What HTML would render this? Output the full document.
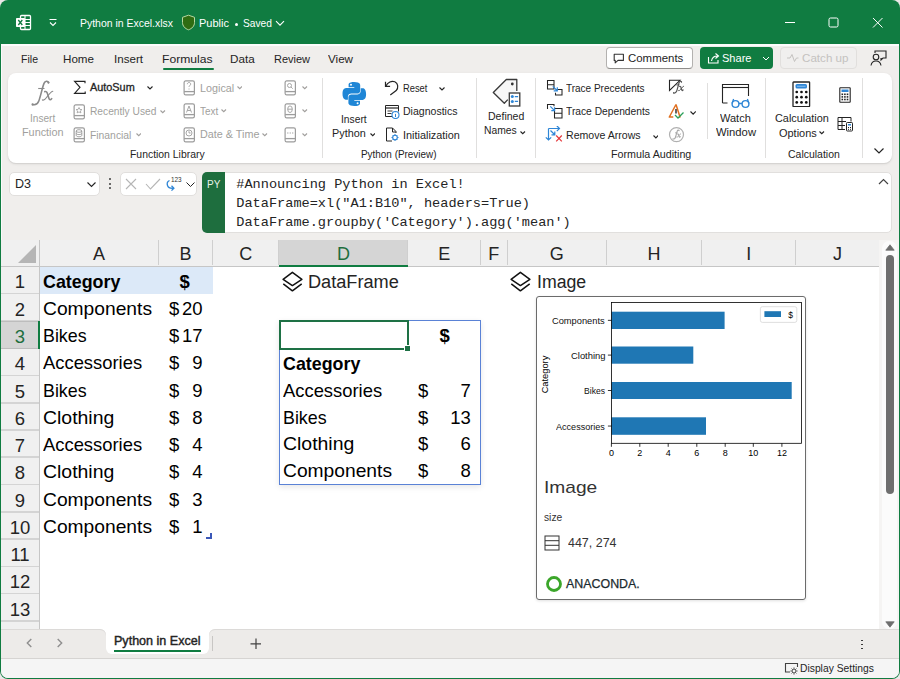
<!DOCTYPE html><html><head><meta charset="utf-8"><style>
html,body{margin:0;padding:0;width:900px;height:679px;overflow:hidden;background:#ebe8e8;}
.r{position:absolute;display:block;}
.t{position:absolute;white-space:pre;}
</style></head><body>
<div class="r" style="left:0px;top:0px;width:900px;height:679px;background:#107c41;border-radius:8px;"></div>
<div class="r" style="left:1px;top:44px;width:898px;height:634px;background:#f0eeec;border-radius:0 0 7px 7px;"></div>
<div class="r" style="left:1px;top:44px;width:898px;height:2px;background:#fcfcfc;"></div>
<div class="r" style="left:1px;top:44px;width:1px;height:600px;background:#fafafa;"></div>
<svg class="r" style="left:15px;top:14px;" width="17" height="17" viewBox="0 0 17 17" fill="none"><rect x="5.5" y="1.5" width="10" height="14" rx="1" stroke="#fff" stroke-width="1.3"/>
<path d="M10 2v13M6 5.5h9M6 8.5h9M6 11.5h9" stroke="#fff" stroke-width="1.1"/>
<rect x="1" y="4" width="9" height="9" rx="0.8" fill="#fff"/>
<path d="M3.3 6l4 5M7.3 6l-4 5" stroke="#107c41" stroke-width="1.3"/></svg>
<svg class="r" style="left:48px;top:18px;" width="10" height="10" viewBox="0 0 10 10" fill="none"><path d="M1.5 1.5h7M2 4.5l3 3 3-3" stroke="#fff" stroke-width="1.1"/></svg>
<div class="t" style="left:79.70px;top:17.94px;font-size:10.7px;line-height:10.7px;color:#fff;font-family:'Liberation Sans', sans-serif;transform:scaleX(0.9784);transform-origin:0 0;">Python in Excel.xlsx</div>
<svg class="r" style="left:181px;top:14px;" width="15" height="17" viewBox="0 0 15 17" fill="none"><path d="M7.5 1.2L13.5 3.3v5.2c0 3.6-2.6 6.2-6 7.3-3.4-1.1-6-3.7-6-7.3V3.3z" fill="#2f6c12" stroke="#b7d7a0" stroke-width="1"/></svg>
<div class="t" style="left:199.00px;top:17.94px;font-size:10.7px;line-height:10.7px;color:#fff;font-family:'Liberation Sans', sans-serif;transform:scaleX(1.0294);transform-origin:0 0;">Public</div>
<div class="r" style="left:234.5px;top:23px;width:3px;height:3px;background:#fff;border-radius:50%;"></div>
<div class="t" style="left:243.00px;top:17.94px;font-size:10.7px;line-height:10.7px;color:#fff;font-family:'Liberation Sans', sans-serif;transform:scaleX(0.9558);transform-origin:0 0;">Saved</div>
<svg class="r" style="left:275px;top:19.5px;" width="10" height="7" viewBox="0 0 10 7" fill="none"><path d="M1 1.2l4 4 4-4" stroke="#fff" stroke-width="1.1"/></svg>
<div class="r" style="left:785px;top:22px;width:10px;height:1px;background:#fff;"></div>
<svg class="r" style="left:828px;top:17px;" width="11" height="11" viewBox="0 0 11 11" fill="none"><rect x="1" y="1" width="9" height="9" rx="1.5" stroke="#fff" stroke-width="1"/></svg>
<svg class="r" style="left:872px;top:17px;" width="11" height="11" viewBox="0 0 11 11" fill="none"><path d="M1 1l9.5 9.5M10.5 1L1 10.5" stroke="#fff" stroke-width="1"/></svg>
<div class="t" style="left:21.00px;top:53.97px;font-size:11.5px;line-height:11.5px;color:#242424;font-family:'Liberation Sans', sans-serif;transform:scaleX(0.9174);transform-origin:0 0;">File</div>
<div class="t" style="left:62.80px;top:53.97px;font-size:11.5px;line-height:11.5px;color:#242424;font-family:'Liberation Sans', sans-serif;transform:scaleX(1.0105);transform-origin:0 0;">Home</div>
<div class="t" style="left:113.50px;top:53.97px;font-size:11.5px;line-height:11.5px;color:#242424;font-family:'Liberation Sans', sans-serif;transform:scaleX(1.0083);transform-origin:0 0;">Insert</div>
<div class="t" style="left:162.00px;top:53.97px;font-size:11.5px;line-height:11.5px;color:#242424;font-family:'Liberation Sans', sans-serif;transform:scaleX(1.0557);transform-origin:0 0;">Formulas</div>
<div class="t" style="left:230.00px;top:53.97px;font-size:11.5px;line-height:11.5px;color:#242424;font-family:'Liberation Sans', sans-serif;transform:scaleX(1.0168);transform-origin:0 0;">Data</div>
<div class="t" style="left:274.00px;top:53.97px;font-size:11.5px;line-height:11.5px;color:#242424;font-family:'Liberation Sans', sans-serif;transform:scaleX(0.9547);transform-origin:0 0;">Review</div>
<div class="t" style="left:328.00px;top:53.97px;font-size:11.5px;line-height:11.5px;color:#242424;font-family:'Liberation Sans', sans-serif;transform:scaleX(1.0113);transform-origin:0 0;">View</div>
<div class="r" style="left:162.5px;top:68px;width:51px;height:2px;background:#107c41;border-radius:1px;"></div>
<div class="r" style="left:605.5px;top:47px;width:87.5px;height:21.8px;background:#fff;border:1px solid #b3b1af;border-bottom-color:#8f8d8b;box-sizing:border-box;border-radius:4px;"></div>
<svg class="r" style="left:612.5px;top:53px;" width="12" height="11" viewBox="0 0 12 11" fill="none"><path d="M1.2 1.2h9.2v6.2H5l-2.8 2.4V7.4h-1z" stroke="#333" stroke-width="1.1" stroke-linejoin="round"/></svg>
<div class="t" style="left:628.00px;top:53.27px;font-size:11.5px;line-height:11.5px;color:#242424;font-family:'Liberation Sans', sans-serif;transform:scaleX(0.9946);transform-origin:0 0;">Comments</div>
<div class="r" style="left:700px;top:47px;width:73px;height:22px;background:#107c41;border-radius:4px;"></div>
<svg class="r" style="left:707px;top:52px;" width="13" height="12" viewBox="0 0 13 12" fill="none"><path d="M1.5 5v6h9.5V8" stroke="#fff" stroke-width="1.1"/><path d="M4.5 9c.5-3 2.5-5 6-5M8.5 1.5l3 2.5-3 2.5" stroke="#fff" stroke-width="1.1"/></svg>
<div class="t" style="left:722.00px;top:53.27px;font-size:11.5px;line-height:11.5px;color:#fff;font-family:'Liberation Sans', sans-serif;transform:scaleX(0.9613);transform-origin:0 0;">Share</div>
<div class="r" style="left:759px;top:50px;width:1px;height:16px;background:#137a42;"></div>
<svg class="r" style="left:761.5px;top:55.5px;" width="8" height="6" viewBox="0 0 8 6" fill="none"><path d="M1 1l3 3 3-3" stroke="#fff" stroke-width="1"/></svg>
<div class="r" style="left:780px;top:47px;width:77px;height:22px;background:#f0efee;border:1px solid #e1dfdd;box-sizing:border-box;border-radius:4px;"></div>
<svg class="r" style="left:786px;top:53px;" width="13" height="10" viewBox="0 0 13 10" fill="none"><path d="M1 5h3l2-3.5 2.5 7 2-3.5h2" stroke="#c4c2c0" stroke-width="1"/></svg>
<div class="t" style="left:802.00px;top:53.27px;font-size:11.5px;line-height:11.5px;color:#c4c2c0;font-family:'Liberation Sans', sans-serif;transform:scaleX(1.0102);transform-origin:0 0;">Catch up</div>
<svg class="r" style="left:870px;top:50px;" width="17" height="17" viewBox="0 0 17 17" fill="none"><circle cx="6" cy="7" r="2.8" stroke="#242424" stroke-width="1.1"/><path d="M1 15.5c.5-3 2.5-4.5 5-4.5s4.5 1.5 5 4.5" stroke="#242424" stroke-width="1.1"/><path d="M5 3V1h11v7h-3l-2 2v-2" stroke="#242424" stroke-width="1.1"/></svg>
<div class="r" style="left:8px;top:73px;width:883.5px;height:90px;background:#fff;border-radius:8px;box-shadow:0 1px 0 #d6d4d2, 0 1px 3px rgba(0,0,0,0.10);"></div>
<div class="r" style="left:322px;top:78px;width:1px;height:80px;background:#e0dfde;"></div>
<div class="r" style="left:476px;top:78px;width:1px;height:80px;background:#e0dfde;"></div>
<div class="r" style="left:535px;top:78px;width:1px;height:80px;background:#e0dfde;"></div>
<div class="r" style="left:707px;top:83px;width:1px;height:56px;background:#e0dfde;"></div>
<div class="r" style="left:765px;top:78px;width:1px;height:80px;background:#e0dfde;"></div>
<div class="r" style="left:862px;top:78px;width:1px;height:80px;background:#e0dfde;"></div>
<svg class="r" style="left:26px;top:78px;" width="32" height="30" viewBox="0 0 32 30" fill="none"><path d="M22.6 4.6C21.8 2.6 19.2 2.7 18 5.4 16.6 8.6 14.2 19.6 12.7 23.3 11.6 26 9.2 27.2 6.6 26.6" stroke="#8a8a8a" stroke-width="1.6" stroke-linecap="round"/><circle cx="22.4" cy="4.6" r="1.1" fill="#8a8a8a"/><circle cx="6.6" cy="26.4" r="1.1" fill="#8a8a8a"/><path d="M12.2 10.5h6.3" stroke="#8a8a8a" stroke-width="1.1"/><path d="M18.8 13.6C20.3 13 21.1 14.2 21.7 16.4L22.9 20.3C23.5 22.2 24.6 22.2 25.7 20.6" stroke="#8a8a8a" stroke-width="1.6" stroke-linecap="round"/><path d="M26.8 13.2C25.6 13.4 22.6 16.6 20.3 19.8 19 21.6 17.6 22.6 16.4 21.9" stroke="#8a8a8a" stroke-width="1.1" stroke-linecap="round"/></svg>
<div class="t" style="left:29.70px;top:112.81px;font-size:10.5px;line-height:10.5px;color:#a19f9d;font-family:'Liberation Sans', sans-serif;transform:scaleX(0.9634);transform-origin:0 0;">Insert</div>
<div class="t" style="left:21.70px;top:127.41px;font-size:10.5px;line-height:10.5px;color:#a19f9d;font-family:'Liberation Sans', sans-serif;transform:scaleX(1.0329);transform-origin:0 0;">Function</div>
<svg class="r" style="left:72.5px;top:80px;" width="14" height="15" viewBox="0 0 14 15" fill="none"><path d="M12 3.2V1.3H1.6L7 7.3 1.6 13.3H12.2V11.4" stroke="#242424" stroke-width="1.15" stroke-linejoin="miter"/></svg>
<div class="t" style="left:90.30px;top:82.41px;font-size:10.5px;line-height:10.5px;color:#242424;font-family:'Liberation Sans', sans-serif;transform:scaleX(1.0349);transform-origin:0 0;-webkit-text-stroke:0.3px #242424;">AutoSum</div>
<svg class="r" style="left:147.0px;top:85.8px;" width="6" height="4.5" viewBox="0 0 6 4.5" fill="none"><path d="M0.5 0.5l2.5 2.5 2.5 -2.5" stroke="#242424" stroke-width="1.1" fill="none"/></svg>
<svg class="r" style="left:73px;top:103.5px;" width="13" height="16" viewBox="0 0 13 16" fill="none"><rect x="1.1" y=".9" width="10.3" height="13.9" rx="1.6" stroke="#9c9c9c" stroke-width="1.2"/><path d="M1.1 11.6h10.3" stroke="#9c9c9c" stroke-width="1.3"/><path d="M6 3.5l.9 1.9 2 .2-1.5 1.3.5 2-1.9-1-1.9 1 .5-2-1.5-1.3 2-.2z" stroke="#9c9c9c" stroke-width=".8"/></svg>
<div class="t" style="left:90.30px;top:106.01px;font-size:10.5px;line-height:10.5px;color:#a19f9d;font-family:'Liberation Sans', sans-serif;transform:scaleX(0.9724);transform-origin:0 0;">Recently Used</div>
<svg class="r" style="left:160.3px;top:109.5px;" width="5.5" height="4.25" viewBox="0 0 5.5 4.25" fill="none"><path d="M0.5 0.5l2.25 2.25 2.25 -2.25" stroke="#a19f9d" stroke-width="1.1" fill="none"/></svg>
<svg class="r" style="left:73px;top:127px;" width="13" height="16" viewBox="0 0 13 16" fill="none"><rect x="1.1" y=".9" width="10.3" height="13.9" rx="1.6" stroke="#9c9c9c" stroke-width="1.2"/><path d="M1.1 11.6h10.3" stroke="#9c9c9c" stroke-width="1.3"/><ellipse cx="6" cy="4" rx="2.8" ry="1.3" stroke="#9c9c9c" stroke-width=".9"/><path d="M3.2 4v4.5c0 .7 1.3 1.3 2.8 1.3s2.8-.6 2.8-1.3V4M3.2 6.3c0 .7 1.3 1.3 2.8 1.3s2.8-.6 2.8-1.3" stroke="#9c9c9c" stroke-width=".9"/></svg>
<div class="t" style="left:90.30px;top:129.51px;font-size:10.5px;line-height:10.5px;color:#a19f9d;font-family:'Liberation Sans', sans-serif;transform:scaleX(0.9852);transform-origin:0 0;">Financial</div>
<svg class="r" style="left:135.5px;top:133.0px;" width="5.5" height="4.25" viewBox="0 0 5.5 4.25" fill="none"><path d="M0.5 0.5l2.25 2.25 2.25 -2.25" stroke="#a19f9d" stroke-width="1.1" fill="none"/></svg>
<svg class="r" style="left:182.7px;top:80px;" width="13" height="16" viewBox="0 0 13 16" fill="none"><rect x="1.1" y=".9" width="10.3" height="13.9" rx="1.6" stroke="#9c9c9c" stroke-width="1.2"/><path d="M1.1 11.6h10.3" stroke="#9c9c9c" stroke-width="1.3"/><path d="M4.3 4.2c0-1 .8-1.7 1.7-1.7s1.7.7 1.7 1.6c0 1.3-1.7 1.4-1.7 2.8M6 8.5v1" stroke="#9c9c9c" stroke-width=".9"/></svg>
<div class="t" style="left:199.60px;top:82.81px;font-size:10.5px;line-height:10.5px;color:#a19f9d;font-family:'Liberation Sans', sans-serif;transform:scaleX(1.0278);transform-origin:0 0;">Logical</div>
<svg class="r" style="left:236.8px;top:85.8px;" width="5.5" height="4.25" viewBox="0 0 5.5 4.25" fill="none"><path d="M0.5 0.5l2.25 2.25 2.25 -2.25" stroke="#a19f9d" stroke-width="1.1" fill="none"/></svg>
<svg class="r" style="left:182.7px;top:103px;" width="13" height="16" viewBox="0 0 13 16" fill="none"><rect x="1.1" y=".9" width="10.3" height="13.9" rx="1.6" stroke="#9c9c9c" stroke-width="1.2"/><path d="M1.1 11.6h10.3" stroke="#9c9c9c" stroke-width="1.3"/><path d="M3.5 9.5L6 3l2.5 6.5M4.3 7.5h3.4" stroke="#9c9c9c" stroke-width=".9"/></svg>
<div class="t" style="left:199.60px;top:106.41px;font-size:10.5px;line-height:10.5px;color:#a19f9d;font-family:'Liberation Sans', sans-serif;transform:scaleX(0.9451);transform-origin:0 0;">Text</div>
<svg class="r" style="left:221.3px;top:109.3px;" width="5.5" height="4.25" viewBox="0 0 5.5 4.25" fill="none"><path d="M0.5 0.5l2.25 2.25 2.25 -2.25" stroke="#a19f9d" stroke-width="1.1" fill="none"/></svg>
<svg class="r" style="left:182.7px;top:127px;" width="13" height="16" viewBox="0 0 13 16" fill="none"><rect x="1.1" y=".9" width="10.3" height="13.9" rx="1.6" stroke="#9c9c9c" stroke-width="1.2"/><path d="M1.1 11.6h10.3" stroke="#9c9c9c" stroke-width="1.3"/><circle cx="6" cy="6" r="3" stroke="#9c9c9c" stroke-width=".9"/><path d="M6 4.2V6h1.6" stroke="#9c9c9c" stroke-width=".9"/></svg>
<div class="t" style="left:199.60px;top:129.41px;font-size:10.5px;line-height:10.5px;color:#a19f9d;font-family:'Liberation Sans', sans-serif;transform:scaleX(1.0282);transform-origin:0 0;">Date &amp; Time</div>
<svg class="r" style="left:262.1px;top:132.5px;" width="5.5" height="4.25" viewBox="0 0 5.5 4.25" fill="none"><path d="M0.5 0.5l2.25 2.25 2.25 -2.25" stroke="#a19f9d" stroke-width="1.1" fill="none"/></svg>
<svg class="r" style="left:284.4px;top:80px;" width="13" height="16" viewBox="0 0 13 16" fill="none"><rect x="1.1" y=".9" width="10.3" height="13.9" rx="1.6" stroke="#9c9c9c" stroke-width="1.2"/><path d="M1.1 11.6h10.3" stroke="#9c9c9c" stroke-width="1.3"/><circle cx="5.5" cy="5.5" r="2" stroke="#9c9c9c" stroke-width=".9"/><path d="M7 7l1.7 1.7" stroke="#9c9c9c" stroke-width=".9"/></svg>
<svg class="r" style="left:302.0px;top:85.8px;" width="5.5" height="4.25" viewBox="0 0 5.5 4.25" fill="none"><path d="M0.5 0.5l2.25 2.25 2.25 -2.25" stroke="#a19f9d" stroke-width="1.1" fill="none"/></svg>
<svg class="r" style="left:284.4px;top:103px;" width="13" height="16" viewBox="0 0 13 16" fill="none"><rect x="1.1" y=".9" width="10.3" height="13.9" rx="1.6" stroke="#9c9c9c" stroke-width="1.2"/><path d="M1.1 11.6h10.3" stroke="#9c9c9c" stroke-width="1.3"/><ellipse cx="6" cy="6.2" rx="2.3" ry="3.3" stroke="#9c9c9c" stroke-width=".9"/><path d="M3.7 6.2h4.6" stroke="#9c9c9c" stroke-width=".9"/></svg>
<svg class="r" style="left:302.0px;top:109.3px;" width="5.5" height="4.25" viewBox="0 0 5.5 4.25" fill="none"><path d="M0.5 0.5l2.25 2.25 2.25 -2.25" stroke="#a19f9d" stroke-width="1.1" fill="none"/></svg>
<svg class="r" style="left:284.4px;top:127px;" width="13" height="16" viewBox="0 0 13 16" fill="none"><rect x="1.1" y=".9" width="10.3" height="13.9" rx="1.6" stroke="#9c9c9c" stroke-width="1.2"/><path d="M1.1 11.6h10.3" stroke="#9c9c9c" stroke-width="1.3"/><path d="M3.2 6h1.2M5.65 6h1.2M8.1 6h1.2" stroke="#9c9c9c" stroke-width="1.2"/></svg>
<svg class="r" style="left:302.0px;top:132.5px;" width="5.5" height="4.25" viewBox="0 0 5.5 4.25" fill="none"><path d="M0.5 0.5l2.25 2.25 2.25 -2.25" stroke="#a19f9d" stroke-width="1.1" fill="none"/></svg>
<div class="t" style="left:129.80px;top:148.91px;font-size:10.5px;line-height:10.5px;color:#242424;font-family:'Liberation Sans', sans-serif;transform:scaleX(0.9909);transform-origin:0 0;">Function Library</div>
<svg class="r" style="left:341px;top:80.5px;" width="27" height="26" viewBox="0 0 27 26" fill="none"><path d="M13.2 1c-6 0-5.6 2.6-5.6 2.6v2.7h5.7v.8H5.4S1.5 6.7 1.5 12.8s3.4 5.9 3.4 5.9h2v-2.8s-.1-3.4 3.4-3.4h5.7s3.2.1 3.2-3.1V4.2S19.7 1 13.2 1zm-3.2 1.8a1 1 0 110 2 1 1 0 010-2z" fill="#1f86d6"/>
<path d="M13.4 25c6 0 5.6-2.6 5.6-2.6v-2.7h-5.7v-.8h7.9s3.9.4 3.9-5.7-3.4-5.9-3.4-5.9h-2v2.8s.1 3.4-3.4 3.4H10.6s-3.2-.1-3.2 3.1v5.2S6.9 25 13.4 25zm3.2-1.8a1 1 0 110-2 1 1 0 010 2z" fill="#1f86d6"/></svg>
<div class="t" style="left:341.20px;top:113.81px;font-size:10.5px;line-height:10.5px;color:#242424;font-family:'Liberation Sans', sans-serif;transform:scaleX(0.9787);transform-origin:0 0;">Insert</div>
<div class="t" style="left:332.40px;top:127.81px;font-size:10.5px;line-height:10.5px;color:#242424;font-family:'Liberation Sans', sans-serif;transform:scaleX(1.0309);transform-origin:0 0;">Python</div>
<svg class="r" style="left:369.8px;top:132.5px;" width="5.5" height="4.25" viewBox="0 0 5.5 4.25" fill="none"><path d="M0.5 0.5l2.25 2.25 2.25 -2.25" stroke="#242424" stroke-width="1.1" fill="none"/></svg>
<svg class="r" style="left:383px;top:78px;" width="17" height="18" viewBox="0 0 17 18" fill="none"><path d="M2.5 3.8v4.6h4.6" stroke="#242424" stroke-width="1.2" stroke-linejoin="miter"/><path d="M2.8 8.2C4.8 4.2 8.6 2.4 11.8 3.8 15.3 5.4 15.6 9.8 13.2 12.6L7.3 17" stroke="#242424" stroke-width="1.2"/></svg>
<div class="t" style="left:403.40px;top:82.71px;font-size:10.5px;line-height:10.5px;color:#242424;font-family:'Liberation Sans', sans-serif;transform:scaleX(0.8895);transform-origin:0 0;">Reset</div>
<svg class="r" style="left:439.2px;top:87.0px;" width="6" height="4.5" viewBox="0 0 6 4.5" fill="none"><path d="M0.5 0.5l2.5 2.5 2.5 -2.5" stroke="#242424" stroke-width="1.1" fill="none"/></svg>
<svg class="r" style="left:384px;top:104px;" width="16" height="15" viewBox="0 0 16 15" fill="none"><path d="M1.5 1.5h13v6M1.5 1.5v11h7" stroke="#242424" stroke-width="1"/><path d="M1.5 4h13" stroke="#242424" stroke-width="1.2"/><path d="M3.5 7h5M3.5 9.5h4" stroke="#242424" stroke-width=".9"/><circle cx="11.5" cy="11" r="3.5" fill="#fff" stroke="#2f86d6" stroke-width="1.1"/><path d="M11.5 10v3M11.5 8.8v.3" stroke="#2f86d6" stroke-width="1"/></svg>
<div class="t" style="left:403.40px;top:106.01px;font-size:10.5px;line-height:10.5px;color:#242424;font-family:'Liberation Sans', sans-serif;transform:scaleX(1.0041);transform-origin:0 0;">Diagnostics</div>
<svg class="r" style="left:384px;top:127px;" width="16" height="15" viewBox="0 0 16 15" fill="none"><path d="M8 14H2.5V1h6l3.5 3.5V6" stroke="#242424" stroke-width="1"/><path d="M8.5 1v4h3.5" stroke="#242424" stroke-width="1"/><circle cx="11" cy="10.5" r="2.3" stroke="#2f86d6" stroke-width="1.1"/><path d="M11 7v1.3M11 12.7V14M7.5 10.5h1.3M13.2 10.5h1.3M8.6 8.1l.8.8M12.6 12.1l.8.8M8.6 12.9l.8-.8M12.6 8.9l.8-.8" stroke="#2f86d6" stroke-width="1"/></svg>
<div class="t" style="left:403.40px;top:129.61px;font-size:10.5px;line-height:10.5px;color:#242424;font-family:'Liberation Sans', sans-serif;transform:scaleX(1.0353);transform-origin:0 0;">Initialization</div>
<div class="t" style="left:361.40px;top:148.71px;font-size:10.5px;line-height:10.5px;color:#242424;font-family:'Liberation Sans', sans-serif;transform:scaleX(0.9444);transform-origin:0 0;">Python (Preview)</div>
<svg class="r" style="left:488px;top:76px;" width="34" height="32" viewBox="0 0 34 32" fill="none"><path d="M28.8 15V3.5H18.3L5.3 16.5 16.3 27.3 19.8 23.6" fill="#f7f7f7" stroke="#3a3a3a" stroke-width="1.3" stroke-linejoin="round"/><circle cx="24.3" cy="8" r="1.4" fill="#333"/><rect x="21.3" y="17" width="10.5" height="13" fill="#fff" stroke="#3a3a3a" stroke-width="1.3"/><circle cx="24.3" cy="20.6" r="1.5" fill="#2f86d6"/><circle cx="24.3" cy="25.4" r="1.5" fill="#2f86d6"/><path d="M26.8 20.6h3.3M26.8 25.4h3.3" stroke="#2f86d6" stroke-width="1.1"/></svg>
<div class="t" style="left:487.60px;top:110.61px;font-size:10.5px;line-height:10.5px;color:#242424;font-family:'Liberation Sans', sans-serif;transform:scaleX(1.0030);transform-origin:0 0;">Defined</div>
<div class="t" style="left:484.20px;top:125.41px;font-size:10.5px;line-height:10.5px;color:#242424;font-family:'Liberation Sans', sans-serif;transform:scaleX(0.9832);transform-origin:0 0;">Names</div>
<svg class="r" style="left:520.3px;top:130.5px;" width="5.5" height="4.25" viewBox="0 0 5.5 4.25" fill="none"><path d="M0.5 0.5l2.25 2.25 2.25 -2.25" stroke="#242424" stroke-width="1.1" fill="none"/></svg>
<svg class="r" style="left:544px;top:78px;" width="22" height="18" viewBox="0 0 22 18" fill="none"><path d="M3.5 2.5h6.5v8.5H3.5zM3.5 6.7h6.5" stroke="#242424" stroke-width="1.05"/><path d="M12.5 11.5h5.5v5.5h-6.5v-2.2" stroke="#242424" stroke-width="1.05"/><path d="M8.8 8.3l4.2 4.2M13.3 9.2v3.6H9.7" stroke="#2f86d6" stroke-width="1.2"/></svg>
<div class="t" style="left:565.90px;top:82.71px;font-size:10.5px;line-height:10.5px;color:#242424;font-family:'Liberation Sans', sans-serif;transform:scaleX(0.9517);transform-origin:0 0;">Trace Precedents</div>
<svg class="r" style="left:544px;top:102px;" width="22" height="18" viewBox="0 0 22 18" fill="none"><path d="M3.5 7V2.5h6.5v1.8" stroke="#242424" stroke-width="1.05"/><path d="M10.5 6.5h7.5v9.5h-7.5zM10.5 11.2h7.5" stroke="#242424" stroke-width="1.05"/><path d="M6.3 4.3l4 4M10.6 5.3v3.3H7.3" stroke="#2f86d6" stroke-width="1.2"/></svg>
<div class="t" style="left:565.90px;top:106.11px;font-size:10.5px;line-height:10.5px;color:#242424;font-family:'Liberation Sans', sans-serif;transform:scaleX(0.9756);transform-origin:0 0;">Trace Dependents</div>
<svg class="r" style="left:544px;top:126px;" width="22" height="18" viewBox="0 0 22 18" fill="none"><path d="M4.5 2.5v11.5M1.8 11.3l2.7 2.7 2.7-2.7M4.5 2.5h11M12.8 -.2l2.7 2.7-2.7 2.7M6.5 4.5l4 4M10.8 5.5v3.3H7.5" stroke="#2f86d6" stroke-width="1.2"/><path d="M12.2 9.5l5.6 5.8M17.8 9.5l-5.6 5.8" stroke="#e5383b" stroke-width="1.2"/></svg>
<div class="t" style="left:565.90px;top:129.61px;font-size:10.5px;line-height:10.5px;color:#242424;font-family:'Liberation Sans', sans-serif;transform:scaleX(1.0066);transform-origin:0 0;">Remove Arrows</div>
<svg class="r" style="left:652.5px;top:134.5px;" width="5.8" height="4.4" viewBox="0 0 5.8 4.4" fill="none"><path d="M0.5 0.5l2.4 2.4 2.4 -2.4" stroke="#242424" stroke-width="1.1" fill="none"/></svg>
<svg class="r" style="left:666px;top:77px;" width="22" height="20" viewBox="0 0 22 20" fill="none"><path d="M3.5 3.3h10.5L3.5 13.5z" stroke="#242424" stroke-width="1.1" stroke-linejoin="miter"/><g transform="translate(4.25,2.65) scale(0.5)"><path d="M22.6 4.6C21.8 2.6 19.2 2.7 18 5.4 16.6 8.6 14.2 19.6 12.7 23.3 11.6 26 9.2 27.2 6.6 26.6" stroke="#555" stroke-width="2.4" stroke-linecap="round"/><circle cx="22.4" cy="4.6" r="1.1" fill="#555"/><circle cx="6.6" cy="26.4" r="1.1" fill="#555"/><path d="M12.2 10.5h6.3" stroke="#555" stroke-width="2"/><path d="M18.8 13.6C20.3 13 21.1 14.2 21.7 16.4L22.9 20.3C23.5 22.2 24.6 22.2 25.7 20.6" stroke="#555" stroke-width="2.4" stroke-linecap="round"/><path d="M26.8 13.2C25.6 13.4 22.6 16.6 20.3 19.8 19 21.6 17.6 22.6 16.4 21.9" stroke="#555" stroke-width="2" stroke-linecap="round"/></g></svg>
<svg class="r" style="left:666px;top:101px;" width="22" height="19" viewBox="0 0 22 19" fill="none"><path d="M10 3.5L3.3 16h4M13 16h1l-4-12.5" stroke="#e07020" stroke-width="1.5" stroke-linejoin="round"/><path d="M10 8v4.5" stroke="#555" stroke-width="1.8"/><path d="M9 14l3 3 5.5-5.5" stroke="#2aa05a" stroke-width="1.3"/></svg>
<svg class="r" style="left:690.2px;top:111.0px;" width="6.3" height="4.65" viewBox="0 0 6.3 4.65" fill="none"><path d="M0.5 0.5l2.65 2.65 2.65 -2.65" stroke="#242424" stroke-width="1.1" fill="none"/></svg>
<svg class="r" style="left:666px;top:125px;" width="22" height="19" viewBox="0 0 22 19" fill="none"><circle cx="10.5" cy="9.6" r="7" stroke="#b0b0b0" stroke-width="1.2"/><g transform="translate(4.45,3.86) scale(0.38)"><path d="M22.6 4.6C21.8 2.6 19.2 2.7 18 5.4 16.6 8.6 14.2 19.6 12.7 23.3 11.6 26 9.2 27.2 6.6 26.6" stroke="#a8a8a8" stroke-width="3" stroke-linecap="round"/><circle cx="22.4" cy="4.6" r="1.1" fill="#a8a8a8"/><circle cx="6.6" cy="26.4" r="1.1" fill="#a8a8a8"/><path d="M12.2 10.5h6.3" stroke="#a8a8a8" stroke-width="2.6"/><path d="M18.8 13.6C20.3 13 21.1 14.2 21.7 16.4L22.9 20.3C23.5 22.2 24.6 22.2 25.7 20.6" stroke="#a8a8a8" stroke-width="3" stroke-linecap="round"/><path d="M26.8 13.2C25.6 13.4 22.6 16.6 20.3 19.8 19 21.6 17.6 22.6 16.4 21.9" stroke="#a8a8a8" stroke-width="2.6" stroke-linecap="round"/></g></svg>
<div class="t" style="left:610.70px;top:149.11px;font-size:10.5px;line-height:10.5px;color:#242424;font-family:'Liberation Sans', sans-serif;transform:scaleX(1.0191);transform-origin:0 0;">Formula Auditing</div>
<svg class="r" style="left:721px;top:82.5px;" width="31" height="27" viewBox="0 0 31 27" fill="none"><path d="M1.5 20V1.5h26V13M1.5 20h5" stroke="#242424" stroke-width="1.1"/><path d="M1.5 4.5h26" stroke="#242424" stroke-width="1.1"/><circle cx="14.5" cy="21" r="3.4" fill="#fff" stroke="#2f86d6" stroke-width="1.4"/><circle cx="24.5" cy="21" r="3.4" fill="#fff" stroke="#2f86d6" stroke-width="1.4"/><path d="M17.9 20.5h3.2M11.1 20.5l1.5-4.5M27.9 20.5l-1.5-4.5" stroke="#2f86d6" stroke-width="1.3"/></svg>
<div class="t" style="left:720.00px;top:113.01px;font-size:10.5px;line-height:10.5px;color:#242424;font-family:'Liberation Sans', sans-serif;transform:scaleX(1.0488);transform-origin:0 0;">Watch</div>
<div class="t" style="left:715.60px;top:127.21px;font-size:10.5px;line-height:10.5px;color:#242424;font-family:'Liberation Sans', sans-serif;transform:scaleX(1.0711);transform-origin:0 0;">Window</div>
<svg class="r" style="left:792px;top:80.5px;" width="19" height="26" viewBox="0 0 19 26" fill="none"><rect x="1" y="1" width="16.6" height="24.6" rx=".6" stroke="#242424" stroke-width="1.3"/><rect x="3.5" y="3" width="11.5" height="4.5" rx="1.5" fill="#2f86d6"/><path d="M5 5.25h8.5" stroke="#8cc0ee" stroke-width="1"/><circle cx="4.75" cy="11.0" r="1.35" fill="#111"/><circle cx="4.75" cy="16.2" r="1.35" fill="#111"/><circle cx="4.75" cy="21.4" r="1.35" fill="#111"/><circle cx="9.5" cy="11.0" r="1.35" fill="#111"/><circle cx="9.5" cy="16.2" r="1.35" fill="#111"/><circle cx="9.5" cy="21.4" r="1.35" fill="#111"/><circle cx="14.25" cy="11.0" r="1.35" fill="#111"/><circle cx="14.25" cy="16.2" r="1.35" fill="#111"/><circle cx="14.25" cy="21.4" r="1.35" fill="#111"/></svg>
<div class="t" style="left:775.00px;top:113.11px;font-size:10.5px;line-height:10.5px;color:#242424;font-family:'Liberation Sans', sans-serif;transform:scaleX(1.0376);transform-origin:0 0;">Calculation</div>
<div class="t" style="left:779.00px;top:127.51px;font-size:10.5px;line-height:10.5px;color:#242424;font-family:'Liberation Sans', sans-serif;transform:scaleX(1.0418);transform-origin:0 0;">Options</div>
<svg class="r" style="left:819.0px;top:131.0px;" width="5.5" height="4.25" viewBox="0 0 5.5 4.25" fill="none"><path d="M0.5 0.5l2.25 2.25 2.25 -2.25" stroke="#242424" stroke-width="1.1" fill="none"/></svg>
<svg class="r" style="left:838.5px;top:86.5px;" width="12" height="16" viewBox="0 0 12 16" fill="none"><rect x=".8" y=".8" width="10.4" height="14.4" rx=".4" stroke="#242424" stroke-width="1.1"/><rect x="2.5" y="2.5" width="7" height="2.5" fill="#2f86d6"/><rect x="2.5" y="6.5" width="1.6" height="1.6" fill="#242424"/><rect x="2.5" y="9.1" width="1.6" height="1.6" fill="#242424"/><rect x="2.5" y="11.7" width="1.6" height="1.6" fill="#242424"/><rect x="5.1" y="6.5" width="1.6" height="1.6" fill="#242424"/><rect x="5.1" y="9.1" width="1.6" height="1.6" fill="#242424"/><rect x="5.1" y="11.7" width="1.6" height="1.6" fill="#242424"/><rect x="7.7" y="6.5" width="1.6" height="1.6" fill="#242424"/><rect x="7.7" y="9.1" width="1.6" height="1.6" fill="#242424"/><rect x="7.7" y="11.7" width="1.6" height="1.6" fill="#242424"/></svg>
<svg class="r" style="left:836.5px;top:116px;" width="16" height="16" viewBox="0 0 16 16" fill="none"><path d="M1 1.5h13v4M1 1.5v12h7M1 5.5h8M1 9.5h7M5 1.5v12" stroke="#242424" stroke-width="1"/><rect x="9.5" y="6.5" width="6" height="8.5" rx=".8" fill="#fff" stroke="#242424" stroke-width="1"/><rect x="11" y="8" width="3" height="1.5" fill="#2f86d6"/><path d="M11 11.5h1M13 11.5h1M11 13.3h1M13 13.3h1" stroke="#242424" stroke-width="1"/></svg>
<div class="t" style="left:787.80px;top:149.01px;font-size:10.5px;line-height:10.5px;color:#242424;font-family:'Liberation Sans', sans-serif;transform:scaleX(0.9972);transform-origin:0 0;">Calculation</div>
<svg class="r" style="left:873.9px;top:148.0px;" width="10" height="6.5" viewBox="0 0 10 6.5" fill="none"><path d="M0.5 0.5l4.5 4.5 4.5 -4.5" stroke="#242424" stroke-width="1.2" fill="none"/></svg>
<div class="r" style="left:8.5px;top:171.5px;width:91.5px;height:24px;background:#fff;border:1px solid #e1dfdd;box-sizing:border-box;border-radius:5px;"></div>
<div class="t" style="left:14.70px;top:177.84px;font-size:12px;line-height:12px;color:#242424;font-family:'Liberation Sans', sans-serif;transform:scaleX(1.0430);transform-origin:0 0;">D3</div>
<svg class="r" style="left:86.5px;top:181.8px;" width="9" height="6.0" viewBox="0 0 9 6.0" fill="none"><path d="M0.5 0.5l4.0 4.0 4.0 -4.0" stroke="#242424" stroke-width="1.1" fill="none"/></svg>
<div class="r" style="left:109.3px;top:178.3px;width:1.8px;height:1.8px;background:#424242;border-radius:50%;"></div>
<div class="r" style="left:109.3px;top:182.8px;width:1.8px;height:1.8px;background:#424242;border-radius:50%;"></div>
<div class="r" style="left:109.3px;top:187.3px;width:1.8px;height:1.8px;background:#424242;border-radius:50%;"></div>
<div class="r" style="left:119.5px;top:171.5px;width:77px;height:24px;background:#fff;border:1px solid #e1dfdd;box-sizing:border-box;border-radius:5px;"></div>
<svg class="r" style="left:125px;top:178px;" width="12" height="12" viewBox="0 0 12 12" fill="none"><path d="M1 1l10 10M11 1L1 11" stroke="#b5b5b5" stroke-width="1.1"/></svg>
<svg class="r" style="left:145px;top:178px;" width="16" height="12" viewBox="0 0 16 12" fill="none"><path d="M1 6l4.5 5L15 1" stroke="#b5b5b5" stroke-width="1.1"/></svg>
<svg class="r" style="left:165px;top:178px;" width="12" height="14" viewBox="0 0 12 14" fill="none"><path d="M4.5 2.5C2.5 3.5 1.8 5.5 2.5 7.5 3 9 5 10.5 8.5 10.2" stroke="#2f86d6" stroke-width="1.3" fill="none"/><path d="M6.5 7.8l2.4 2.4-2.4 2.4" stroke="#2f86d6" stroke-width="1.3" fill="none"/></svg>
<div class="t" style="left:170.70px;top:175.85px;font-size:7.5px;line-height:7.5px;color:#333;font-family:'Liberation Sans', sans-serif;transform:scaleX(0.8471);transform-origin:0 0;">123</div>
<svg class="r" style="left:186.0px;top:181.5px;" width="9" height="6.0" viewBox="0 0 9 6.0" fill="none"><path d="M0.5 0.5l4.0 4.0 4.0 -4.0" stroke="#242424" stroke-width="1.0" fill="none"/></svg>
<div class="r" style="left:201.7px;top:172px;width:690px;height:60.5px;background:#fff;border:1px solid #e1dfdd;box-sizing:border-box;border-radius:5px;"></div>
<div class="r" style="left:201.7px;top:172px;width:23px;height:60.5px;background:#1e6e3e;border-radius:5px 0 0 5px;"></div>
<div class="t" style="left:206.70px;top:179.11px;font-size:10.5px;line-height:10.5px;color:#e8f3e8;font-family:'Liberation Sans', sans-serif;transform:scaleX(0.9495);transform-origin:0 0;">PY</div>
<div class="t" style="left:236.30px;top:177.58px;font-size:13.6px;line-height:13.6px;color:#242424;font-family:'Liberation Mono', monospace;">#Announcing Python in Excel!</div>
<div class="t" style="left:236.30px;top:196.58px;font-size:13.6px;line-height:13.6px;color:#242424;font-family:'Liberation Mono', monospace;">DataFrame=xl(&quot;A1:B10&quot;, headers=True)</div>
<div class="t" style="left:236.30px;top:215.58px;font-size:13.6px;line-height:13.6px;color:#242424;font-family:'Liberation Mono', monospace;">DataFrame.groupby('Category').agg('mean')</div>
<svg class="r" style="left:878px;top:178px;" width="11" height="7" viewBox="0 0 11 7" fill="none"><path d="M1 6l4.5-4.5L10 6" stroke="#424242" stroke-width="1.2"/></svg>
<div class="r" style="left:1px;top:239.5px;width:878.3px;height:27.3px;background:#f0f0f0;"></div>
<div class="r" style="left:39.5px;top:266.8px;width:839.8px;height:363.2px;background:#fff;"></div>
<div class="r" style="left:1px;top:266.8px;width:38.5px;height:363.2px;background:#f0f0f0;"></div>
<div class="r" style="left:279px;top:239.5px;width:128.9px;height:27.3px;background:#d5d5d5;"></div>
<div class="r" style="left:157.9px;top:239.5px;width:1px;height:25.5px;background:#cfcfcf;"></div>
<div class="r" style="left:212.2px;top:239.5px;width:1px;height:25.5px;background:#cfcfcf;"></div>
<div class="r" style="left:278.4px;top:239.5px;width:1px;height:25.5px;background:#cfcfcf;"></div>
<div class="r" style="left:407.4px;top:239.5px;width:1px;height:25.5px;background:#cfcfcf;"></div>
<div class="r" style="left:480.2px;top:239.5px;width:1px;height:25.5px;background:#cfcfcf;"></div>
<div class="r" style="left:506.5px;top:239.5px;width:1px;height:25.5px;background:#cfcfcf;"></div>
<div class="r" style="left:606.0px;top:239.5px;width:1px;height:25.5px;background:#cfcfcf;"></div>
<div class="r" style="left:700.9px;top:239.5px;width:1px;height:25.5px;background:#cfcfcf;"></div>
<div class="r" style="left:795.4px;top:239.5px;width:1px;height:25.5px;background:#cfcfcf;"></div>
<div class="r" style="left:39px;top:239.5px;width:1px;height:390.5px;background:#c6c6c6;"></div>
<div class="r" style="left:1px;top:265.8px;width:878.3px;height:1px;background:#c6c6c6;"></div>
<div class="r" style="left:279px;top:264.8px;width:128.9px;height:2px;background:#107c41;"></div>
<svg class="r" style="left:17px;top:244px;" width="20" height="20" viewBox="0 0 20 20" fill="none"><path d="M19 1v18H1z" fill="#b5b5b5"/></svg>
<div class="t" style="left:39.5px;width:118.9px;top:245.36px;font-size:18px;line-height:18px;text-align:center;color:#242424;font-family:'Liberation Sans',sans-serif;">A</div>
<div class="t" style="left:158.4px;width:54.29999999999998px;top:245.36px;font-size:18px;line-height:18px;text-align:center;color:#242424;font-family:'Liberation Sans',sans-serif;">B</div>
<div class="t" style="left:212.7px;width:66.19999999999999px;top:245.36px;font-size:18px;line-height:18px;text-align:center;color:#242424;font-family:'Liberation Sans',sans-serif;">C</div>
<div class="t" style="left:278.9px;width:129.0px;top:245.36px;font-size:18px;line-height:18px;text-align:center;color:#1e6e3e;font-family:'Liberation Sans',sans-serif;">D</div>
<div class="t" style="left:407.9px;width:72.80000000000001px;top:245.36px;font-size:18px;line-height:18px;text-align:center;color:#242424;font-family:'Liberation Sans',sans-serif;">E</div>
<div class="t" style="left:480.7px;width:26.30000000000001px;top:245.36px;font-size:18px;line-height:18px;text-align:center;color:#242424;font-family:'Liberation Sans',sans-serif;">F</div>
<div class="t" style="left:507px;width:99.5px;top:245.36px;font-size:18px;line-height:18px;text-align:center;color:#242424;font-family:'Liberation Sans',sans-serif;">G</div>
<div class="t" style="left:606.5px;width:94.89999999999998px;top:245.36px;font-size:18px;line-height:18px;text-align:center;color:#242424;font-family:'Liberation Sans',sans-serif;">H</div>
<div class="t" style="left:701.4px;width:94.5px;top:245.36px;font-size:18px;line-height:18px;text-align:center;color:#242424;font-family:'Liberation Sans',sans-serif;">I</div>
<div class="t" style="left:795.9px;width:83.39999999999998px;top:245.36px;font-size:18px;line-height:18px;text-align:center;color:#242424;font-family:'Liberation Sans',sans-serif;">J</div>
<div class="r" style="left:1px;top:321.34000000000003px;width:38px;height:27.27px;background:#d5d5d5;"></div>
<div class="r" style="left:1px;top:292.87px;width:38px;height:1.6px;background:#d4d4d4;"></div>
<div class="t" style="left:1px;width:38px;top:273.44px;font-size:18.5px;line-height:18.5px;text-align:center;color:#242424;font-family:'Liberation Sans',sans-serif;">1</div>
<div class="r" style="left:1px;top:320.14px;width:38px;height:1.6px;background:#d4d4d4;"></div>
<div class="t" style="left:1px;width:38px;top:300.71px;font-size:18.5px;line-height:18.5px;text-align:center;color:#242424;font-family:'Liberation Sans',sans-serif;">2</div>
<div class="r" style="left:1px;top:347.41px;width:38px;height:1.6px;background:#d4d4d4;"></div>
<div class="t" style="left:1px;width:38px;top:327.98px;font-size:18.5px;line-height:18.5px;text-align:center;color:#1e6e3e;font-family:'Liberation Sans',sans-serif;">3</div>
<div class="r" style="left:1px;top:374.68px;width:38px;height:1.6px;background:#d4d4d4;"></div>
<div class="t" style="left:1px;width:38px;top:355.25px;font-size:18.5px;line-height:18.5px;text-align:center;color:#242424;font-family:'Liberation Sans',sans-serif;">4</div>
<div class="r" style="left:1px;top:401.95px;width:38px;height:1.6px;background:#d4d4d4;"></div>
<div class="t" style="left:1px;width:38px;top:382.52px;font-size:18.5px;line-height:18.5px;text-align:center;color:#242424;font-family:'Liberation Sans',sans-serif;">5</div>
<div class="r" style="left:1px;top:429.21999999999997px;width:38px;height:1.6px;background:#d4d4d4;"></div>
<div class="t" style="left:1px;width:38px;top:409.79px;font-size:18.5px;line-height:18.5px;text-align:center;color:#242424;font-family:'Liberation Sans',sans-serif;">6</div>
<div class="r" style="left:1px;top:456.49px;width:38px;height:1.6px;background:#d4d4d4;"></div>
<div class="t" style="left:1px;width:38px;top:437.06px;font-size:18.5px;line-height:18.5px;text-align:center;color:#242424;font-family:'Liberation Sans',sans-serif;">7</div>
<div class="r" style="left:1px;top:483.76px;width:38px;height:1.6px;background:#d4d4d4;"></div>
<div class="t" style="left:1px;width:38px;top:464.33px;font-size:18.5px;line-height:18.5px;text-align:center;color:#242424;font-family:'Liberation Sans',sans-serif;">8</div>
<div class="r" style="left:1px;top:511.03000000000003px;width:38px;height:1.6px;background:#d4d4d4;"></div>
<div class="t" style="left:1px;width:38px;top:491.60px;font-size:18.5px;line-height:18.5px;text-align:center;color:#242424;font-family:'Liberation Sans',sans-serif;">9</div>
<div class="r" style="left:1px;top:538.3px;width:38px;height:1.6px;background:#d4d4d4;"></div>
<div class="t" style="left:1px;width:38px;top:518.87px;font-size:18.5px;line-height:18.5px;text-align:center;color:#242424;font-family:'Liberation Sans',sans-serif;">10</div>
<div class="r" style="left:1px;top:565.5699999999999px;width:38px;height:1.6px;background:#d4d4d4;"></div>
<div class="t" style="left:1px;width:38px;top:546.14px;font-size:18.5px;line-height:18.5px;text-align:center;color:#242424;font-family:'Liberation Sans',sans-serif;">11</div>
<div class="r" style="left:1px;top:592.8399999999999px;width:38px;height:1.6px;background:#d4d4d4;"></div>
<div class="t" style="left:1px;width:38px;top:573.41px;font-size:18.5px;line-height:18.5px;text-align:center;color:#242424;font-family:'Liberation Sans',sans-serif;">12</div>
<div class="r" style="left:1px;top:620.1099999999999px;width:38px;height:1.6px;background:#d4d4d4;"></div>
<div class="t" style="left:1px;width:38px;top:600.68px;font-size:18.5px;line-height:18.5px;text-align:center;color:#242424;font-family:'Liberation Sans',sans-serif;">13</div>
<div class="r" style="left:1px;top:647.3799999999999px;width:38px;height:1.6px;background:#d4d4d4;"></div>
<div class="r" style="left:1px;top:320.74px;width:37px;height:1.4px;background:#bdbdbd;"></div>
<div class="r" style="left:1px;top:347.61px;width:37px;height:1.4px;background:#bdbdbd;"></div>
<div class="r" style="left:38.2px;top:320.84000000000003px;width:2px;height:27.77px;background:#107c41;"></div>
<div class="r" style="left:40px;top:266.8px;width:172.7px;height:27.27px;background:#dce9f8;"></div>
<div class="t" style="left:43.30px;top:272.54px;font-size:18.5px;line-height:18.5px;color:#000;font-family:'Liberation Sans', sans-serif;font-weight:bold;transform:scaleX(0.9652);transform-origin:0 0;">Category</div>
<div class="t" style="left:179.50px;top:272.54px;font-size:18.5px;line-height:18.5px;color:#000;font-family:'Liberation Sans', sans-serif;font-weight:bold;">$</div>
<div class="t" style="left:43.30px;top:299.81px;font-size:18.5px;line-height:18.5px;color:#000;font-family:'Liberation Sans', sans-serif;transform:scaleX(1.0391);transform-origin:0 0;">Components</div>
<div class="t" style="left:169.00px;top:299.81px;font-size:18.5px;line-height:18.5px;color:#000;font-family:'Liberation Sans', sans-serif;">$</div>
<div class="t" style="left:150px;width:52.5px;top:299.81px;font-size:18.5px;line-height:18.5px;text-align:right;color:#000;font-family:'Liberation Sans',sans-serif;">20</div>
<div class="t" style="left:43.30px;top:327.08px;font-size:18.5px;line-height:18.5px;color:#000;font-family:'Liberation Sans', sans-serif;transform:scaleX(0.9638);transform-origin:0 0;">Bikes</div>
<div class="t" style="left:169.00px;top:327.08px;font-size:18.5px;line-height:18.5px;color:#000;font-family:'Liberation Sans', sans-serif;">$</div>
<div class="t" style="left:150px;width:52.5px;top:327.08px;font-size:18.5px;line-height:18.5px;text-align:right;color:#000;font-family:'Liberation Sans',sans-serif;">17</div>
<div class="t" style="left:43.30px;top:354.35px;font-size:18.5px;line-height:18.5px;color:#000;font-family:'Liberation Sans', sans-serif;transform:scaleX(0.9937);transform-origin:0 0;">Accessories</div>
<div class="t" style="left:169.00px;top:354.35px;font-size:18.5px;line-height:18.5px;color:#000;font-family:'Liberation Sans', sans-serif;">$</div>
<div class="t" style="left:150px;width:52.5px;top:354.35px;font-size:18.5px;line-height:18.5px;text-align:right;color:#000;font-family:'Liberation Sans',sans-serif;">9</div>
<div class="t" style="left:43.30px;top:381.62px;font-size:18.5px;line-height:18.5px;color:#000;font-family:'Liberation Sans', sans-serif;transform:scaleX(0.9638);transform-origin:0 0;">Bikes</div>
<div class="t" style="left:169.00px;top:381.62px;font-size:18.5px;line-height:18.5px;color:#000;font-family:'Liberation Sans', sans-serif;">$</div>
<div class="t" style="left:150px;width:52.5px;top:381.62px;font-size:18.5px;line-height:18.5px;text-align:right;color:#000;font-family:'Liberation Sans',sans-serif;">9</div>
<div class="t" style="left:43.30px;top:408.89px;font-size:18.5px;line-height:18.5px;color:#000;font-family:'Liberation Sans', sans-serif;transform:scaleX(1.0504);transform-origin:0 0;">Clothing</div>
<div class="t" style="left:169.00px;top:408.89px;font-size:18.5px;line-height:18.5px;color:#000;font-family:'Liberation Sans', sans-serif;">$</div>
<div class="t" style="left:150px;width:52.5px;top:408.89px;font-size:18.5px;line-height:18.5px;text-align:right;color:#000;font-family:'Liberation Sans',sans-serif;">8</div>
<div class="t" style="left:43.30px;top:436.16px;font-size:18.5px;line-height:18.5px;color:#000;font-family:'Liberation Sans', sans-serif;transform:scaleX(0.9937);transform-origin:0 0;">Accessories</div>
<div class="t" style="left:169.00px;top:436.16px;font-size:18.5px;line-height:18.5px;color:#000;font-family:'Liberation Sans', sans-serif;">$</div>
<div class="t" style="left:150px;width:52.5px;top:436.16px;font-size:18.5px;line-height:18.5px;text-align:right;color:#000;font-family:'Liberation Sans',sans-serif;">4</div>
<div class="t" style="left:43.30px;top:463.43px;font-size:18.5px;line-height:18.5px;color:#000;font-family:'Liberation Sans', sans-serif;transform:scaleX(1.0504);transform-origin:0 0;">Clothing</div>
<div class="t" style="left:169.00px;top:463.43px;font-size:18.5px;line-height:18.5px;color:#000;font-family:'Liberation Sans', sans-serif;">$</div>
<div class="t" style="left:150px;width:52.5px;top:463.43px;font-size:18.5px;line-height:18.5px;text-align:right;color:#000;font-family:'Liberation Sans',sans-serif;">4</div>
<div class="t" style="left:43.30px;top:490.70px;font-size:18.5px;line-height:18.5px;color:#000;font-family:'Liberation Sans', sans-serif;transform:scaleX(1.0391);transform-origin:0 0;">Components</div>
<div class="t" style="left:169.00px;top:490.70px;font-size:18.5px;line-height:18.5px;color:#000;font-family:'Liberation Sans', sans-serif;">$</div>
<div class="t" style="left:150px;width:52.5px;top:490.70px;font-size:18.5px;line-height:18.5px;text-align:right;color:#000;font-family:'Liberation Sans',sans-serif;">3</div>
<div class="t" style="left:43.30px;top:517.97px;font-size:18.5px;line-height:18.5px;color:#000;font-family:'Liberation Sans', sans-serif;transform:scaleX(1.0391);transform-origin:0 0;">Components</div>
<div class="t" style="left:169.00px;top:517.97px;font-size:18.5px;line-height:18.5px;color:#000;font-family:'Liberation Sans', sans-serif;">$</div>
<div class="t" style="left:150px;width:52.5px;top:517.97px;font-size:18.5px;line-height:18.5px;text-align:right;color:#000;font-family:'Liberation Sans',sans-serif;">1</div>
<svg class="r" style="left:206px;top:533px;" width="7" height="6" viewBox="0 0 7 6" fill="none"><path d="M5 0v5H0" stroke="#3b58b8" stroke-width="2"/></svg>
<svg class="r" style="left:282px;top:271px;" width="22" height="22" viewBox="0 0 22 22" fill="none"><path d="M10.4 1.3L19.9 8.3 10.4 14.6 1.1 8.3z" stroke="#111" stroke-width="1.5" stroke-linejoin="round"/><path d="M1.3 12.8L10.4 19.8 19.7 12.8" stroke="#111" stroke-width="1.5" stroke-linejoin="round"/></svg>
<div class="t" style="left:307.70px;top:273.06px;font-size:18px;line-height:18px;color:#242424;font-family:'Liberation Sans', sans-serif;transform:scaleX(1.0086);transform-origin:0 0;">DataFrame</div>
<svg class="r" style="left:510px;top:271px;" width="22" height="22" viewBox="0 0 22 22" fill="none"><path d="M10.4 1.3L19.9 8.3 10.4 14.6 1.1 8.3z" stroke="#111" stroke-width="1.5" stroke-linejoin="round"/><path d="M1.3 12.8L10.4 19.8 19.7 12.8" stroke="#111" stroke-width="1.5" stroke-linejoin="round"/></svg>
<div class="t" style="left:536.50px;top:273.06px;font-size:18px;line-height:18px;color:#242424;font-family:'Liberation Sans', sans-serif;transform:scaleX(0.9834);transform-origin:0 0;">Image</div>
<div class="r" style="left:278.6px;top:320.3px;width:202.4px;height:164.3px;background:#fff;border:1.5px solid #5a82d6;box-sizing:border-box;box-shadow:0 2px 6px rgba(0,0,0,0.10);"></div>
<div class="r" style="left:278.6px;top:320.3px;width:130.5px;height:29.5px;background:transparent;border:2px solid #1e7145;box-sizing:border-box;"></div>
<div class="r" style="left:405px;top:346px;width:5px;height:5px;background:#1e7145;border:1px solid #fff;box-sizing:content-box;margin:-1px;"></div>
<div class="t" style="left:439.50px;top:327.14px;font-size:18.5px;line-height:18.5px;color:#000;font-family:'Liberation Sans', sans-serif;font-weight:bold;">$</div>
<div class="t" style="left:283.40px;top:354.54px;font-size:18.5px;line-height:18.5px;color:#000;font-family:'Liberation Sans', sans-serif;font-weight:bold;transform:scaleX(0.9640);transform-origin:0 0;">Category</div>
<div class="t" style="left:283.40px;top:381.64px;font-size:18.5px;line-height:18.5px;color:#000;font-family:'Liberation Sans', sans-serif;transform:scaleX(0.9937);transform-origin:0 0;">Accessories</div>
<div class="t" style="left:418.00px;top:381.64px;font-size:18.5px;line-height:18.5px;color:#000;font-family:'Liberation Sans', sans-serif;">$</div>
<div class="t" style="left:420px;width:50.8px;top:381.64px;font-size:18.5px;line-height:18.5px;text-align:right;color:#000;font-family:'Liberation Sans',sans-serif;">7</div>
<div class="t" style="left:283.40px;top:408.54px;font-size:18.5px;line-height:18.5px;color:#000;font-family:'Liberation Sans', sans-serif;transform:scaleX(0.9638);transform-origin:0 0;">Bikes</div>
<div class="t" style="left:418.00px;top:408.54px;font-size:18.5px;line-height:18.5px;color:#000;font-family:'Liberation Sans', sans-serif;">$</div>
<div class="t" style="left:420px;width:50.8px;top:408.54px;font-size:18.5px;line-height:18.5px;text-align:right;color:#000;font-family:'Liberation Sans',sans-serif;">13</div>
<div class="t" style="left:283.40px;top:435.44px;font-size:18.5px;line-height:18.5px;color:#000;font-family:'Liberation Sans', sans-serif;transform:scaleX(1.0504);transform-origin:0 0;">Clothing</div>
<div class="t" style="left:418.00px;top:435.44px;font-size:18.5px;line-height:18.5px;color:#000;font-family:'Liberation Sans', sans-serif;">$</div>
<div class="t" style="left:420px;width:50.8px;top:435.44px;font-size:18.5px;line-height:18.5px;text-align:right;color:#000;font-family:'Liberation Sans',sans-serif;">6</div>
<div class="t" style="left:283.40px;top:462.34px;font-size:18.5px;line-height:18.5px;color:#000;font-family:'Liberation Sans', sans-serif;transform:scaleX(1.0391);transform-origin:0 0;">Components</div>
<div class="t" style="left:418.00px;top:462.34px;font-size:18.5px;line-height:18.5px;color:#000;font-family:'Liberation Sans', sans-serif;">$</div>
<div class="t" style="left:420px;width:50.8px;top:462.34px;font-size:18.5px;line-height:18.5px;text-align:right;color:#000;font-family:'Liberation Sans',sans-serif;">8</div>
<div class="r" style="left:536px;top:295.5px;width:270px;height:304px;background:#fff;border:1.5px solid #6b6b6b;box-sizing:border-box;border-radius:3px;box-shadow:0 1px 3px rgba(0,0,0,0.12);"></div>
<svg class="r" style="left:536px;top:295px;" width="270" height="170" viewBox="0 0 270 170" fill="none"><rect x="75.39999999999998" y="16.69999999999999" width="113.20000000000005" height="17.30000000000001" fill="#1f77b4"/><path d="M71.89999999999998 25.350000000000023h3.5" stroke="#000" stroke-width="0.8"/><rect x="75.39999999999998" y="51.5" width="81.89999999999998" height="17.19999999999999" fill="#1f77b4"/><path d="M71.89999999999998 60.10000000000002h3.5" stroke="#000" stroke-width="0.8"/><rect x="75.39999999999998" y="87" width="180.30000000000007" height="17" fill="#1f77b4"/><path d="M71.89999999999998 95.5h3.5" stroke="#000" stroke-width="0.8"/><rect x="75.39999999999998" y="122.30000000000001" width="94.60000000000002" height="17.5" fill="#1f77b4"/><path d="M71.89999999999998 131.05h3.5" stroke="#000" stroke-width="0.8"/><rect x="75.39999999999998" y="7.5" width="190.10000000000002" height="140.8" stroke="#000" stroke-width="0.8" fill="none"/><path d="M75.39999999999998 148.3v3.5" stroke="#000" stroke-width="0.8"/><path d="M103.79999999999995 148.3v3.5" stroke="#000" stroke-width="0.8"/><path d="M132.20000000000005 148.3v3.5" stroke="#000" stroke-width="0.8"/><path d="M160.79999999999995 148.3v3.5" stroke="#000" stroke-width="0.8"/><path d="M189.20000000000005 148.3v3.5" stroke="#000" stroke-width="0.8"/><path d="M217.29999999999995 148.3v3.5" stroke="#000" stroke-width="0.8"/><path d="M245.89999999999998 148.3v3.5" stroke="#000" stroke-width="0.8"/><rect x="224.39999999999998" y="11.699999999999989" width="36.4" height="15.7" rx="2" fill="#fff" stroke="#d6d6d6" stroke-width="0.8"/><rect x="228.39999999999998" y="16.19999999999999" width="16.6" height="5.8" fill="#1f77b4"/></svg>
<div class="t" style="left:552.40px;top:316.93px;font-size:9px;line-height:9px;color:#111;font-family:'Liberation Sans', sans-serif;transform:scaleX(1.0308);transform-origin:0 0;">Components</div>
<div class="t" style="left:570.50px;top:351.68px;font-size:9px;line-height:9px;color:#111;font-family:'Liberation Sans', sans-serif;transform:scaleX(1.0448);transform-origin:0 0;">Clothing</div>
<div class="t" style="left:584.00px;top:387.08px;font-size:9px;line-height:9px;color:#111;font-family:'Liberation Sans', sans-serif;transform:scaleX(0.9542);transform-origin:0 0;">Bikes</div>
<div class="t" style="left:556.10px;top:422.63px;font-size:9px;line-height:9px;color:#111;font-family:'Liberation Sans', sans-serif;transform:scaleX(1.0079);transform-origin:0 0;">Accessories</div>
<div class="t" style="left:596.4px;width:30px;top:449.38px;font-size:9px;line-height:9px;text-align:center;color:#000;font-family:'Liberation Sans',sans-serif;">0</div>
<div class="t" style="left:624.8px;width:30px;top:449.38px;font-size:9px;line-height:9px;text-align:center;color:#000;font-family:'Liberation Sans',sans-serif;">2</div>
<div class="t" style="left:653.2px;width:30px;top:449.38px;font-size:9px;line-height:9px;text-align:center;color:#000;font-family:'Liberation Sans',sans-serif;">4</div>
<div class="t" style="left:681.8px;width:30px;top:449.38px;font-size:9px;line-height:9px;text-align:center;color:#000;font-family:'Liberation Sans',sans-serif;">6</div>
<div class="t" style="left:710.2px;width:30px;top:449.38px;font-size:9px;line-height:9px;text-align:center;color:#000;font-family:'Liberation Sans',sans-serif;">8</div>
<div class="t" style="left:738.3px;width:30px;top:449.38px;font-size:9px;line-height:9px;text-align:center;color:#000;font-family:'Liberation Sans',sans-serif;">10</div>
<div class="t" style="left:766.9px;width:30px;top:449.38px;font-size:9px;line-height:9px;text-align:center;color:#000;font-family:'Liberation Sans',sans-serif;">12</div>
<div class="t" style="left:788.30px;top:310.80px;font-size:8.5px;line-height:8.5px;color:#000;font-family:'Liberation Sans', sans-serif;">$</div>
<div class="t" style="left:515px;top:369.5px;width:60px;font-size:9px;line-height:9px;text-align:center;color:#000;font-family:'Liberation Sans',sans-serif;transform:rotate(-90deg) scaleX(1.032);">Category</div>
<div class="t" style="left:544.40px;top:479.31px;font-size:17px;line-height:17px;color:#333;font-family:'Liberation Sans', sans-serif;transform:scaleX(1.1259);transform-origin:0 0;">Image</div>
<div class="t" style="left:544.40px;top:512.19px;font-size:11px;line-height:11px;color:#333;font-family:'Liberation Sans', sans-serif;transform:scaleX(0.9304);transform-origin:0 0;">size</div>
<svg class="r" style="left:543.5px;top:534.5px;" width="16" height="16" viewBox="0 0 16 16" fill="none"><rect x="1" y="1" width="14" height="14" stroke="#333" stroke-width="1"/><path d="M1 5.7h14M1 10.3h14" stroke="#333" stroke-width="1"/></svg>
<div class="t" style="left:568.00px;top:536.54px;font-size:12px;line-height:12px;color:#333;font-family:'Liberation Sans', sans-serif;transform:scaleX(1.0383);transform-origin:0 0;">447, 274</div>
<svg class="r" style="left:545px;top:575px;" width="18" height="18" viewBox="0 0 18 18" fill="none"><circle cx="9" cy="9" r="6.5" stroke="#3ba62a" stroke-width="2.8"/></svg>
<div class="t" style="left:566.00px;top:577.92px;font-size:12.5px;line-height:12.5px;color:#1b2a2e;font-family:'Liberation Sans', sans-serif;transform:scaleX(0.9930);transform-origin:0 0;-webkit-text-stroke:0.25px #1b2a2e;">ANACONDA.</div>
<div class="r" style="left:879.3px;top:239.5px;width:19.4px;height:390.5px;background:#f5f4f3;"></div>
<div class="r" style="left:882.4px;top:241px;width:14.6px;height:388px;background:#fbfbfb;border-radius:7px;"></div>
<svg class="r" style="left:884.5px;top:244px;" width="10" height="7" viewBox="0 0 10 7" fill="none"><path d="M5 .8L9.2 6.2H.8z" fill="#6e6e6e" stroke="#6e6e6e" stroke-width=".8" stroke-linejoin="round"/></svg>
<div class="r" style="left:885.7px;top:255.4px;width:8.1px;height:238.5px;background:#6e6e6e;border-radius:4px;"></div>
<svg class="r" style="left:884.5px;top:621px;" width="10" height="7" viewBox="0 0 10 7" fill="none"><path d="M5 6.2L9.2 .8H.8z" fill="#6e6e6e" stroke="#6e6e6e" stroke-width=".8" stroke-linejoin="round"/></svg>
<div class="r" style="left:1px;top:629.4px;width:897.7px;height:29px;background:#fff;"></div>
<div class="r" style="left:1px;top:629.4px;width:104.8px;height:29px;background:#edebe9;border-top-right-radius:6px;box-shadow:inset 0 1px 0 #dcdad8;"></div>
<div class="r" style="left:208.6px;top:629.4px;width:690.1px;height:29px;background:#edebe9;border-top-left-radius:6px;box-shadow:inset 0 1px 0 #dcdad8;"></div>
<div class="r" style="left:105.8px;top:629.4px;width:102.8px;height:29px;background:#edebe9;"></div>
<div class="r" style="left:105.8px;top:626px;width:102.8px;height:28.3px;background:#fff;border-radius:0 0 6px 6px;"></div>
<svg class="r" style="left:25px;top:637px;" width="9" height="12" viewBox="0 0 9 12" fill="none"><path d="M6.3 2L2.3 6l4 4" stroke="#8f8f8f" stroke-width="1.4"/></svg>
<svg class="r" style="left:55px;top:637px;" width="9" height="12" viewBox="0 0 9 12" fill="none"><path d="M2.7 2l4 4-4 4" stroke="#8f8f8f" stroke-width="1.4"/></svg>
<div class="t" style="left:114.30px;top:635.44px;font-size:12px;line-height:12px;color:#242424;font-family:'Liberation Sans', sans-serif;transform:scaleX(1.0458);transform-origin:0 0;-webkit-text-stroke:0.4px #242424;">Python in Excel</div>
<div class="r" style="left:114.3px;top:649.8px;width:86.5px;height:2px;background:#107c41;"></div>
<div class="r" style="left:212px;top:636px;width:1px;height:15px;background:#c8c6c4;"></div>
<svg class="r" style="left:250px;top:638px;" width="12" height="12" viewBox="0 0 12 12" fill="none"><path d="M6 .5v10.5M.5 5.8H11" stroke="#424242" stroke-width="1.2"/></svg>
<div class="r" style="left:861.1px;top:639.6px;width:1.8px;height:1.8px;background:#242424;border-radius:50%;"></div>
<div class="r" style="left:861.1px;top:643.6px;width:1.8px;height:1.8px;background:#242424;border-radius:50%;"></div>
<div class="r" style="left:861.1px;top:647.6px;width:1.8px;height:1.8px;background:#242424;border-radius:50%;"></div>
<div class="r" style="left:1px;top:658px;width:897.7px;height:19.5px;background:#f5f5f5;border-radius:0 0 7px 7px;"></div>
<div class="r" style="left:1px;top:657.8px;width:897.7px;height:1px;background:#d6d4d2;"></div>
<svg class="r" style="left:783.5px;top:661.5px;" width="15" height="13" viewBox="0 0 15 13" fill="none"><path d="M6 10H1.5V1.5h12V5" stroke="#424242" stroke-width="1.1"/><circle cx="10" cy="9" r="2" stroke="#424242" stroke-width="1"/><path d="M10 5.5v1M10 11.5v1M6.5 9h1M12.5 9h1M7.6 6.6l.7.7M11.7 10.7l.7.7M7.6 11.4l.7-.7M11.7 7.3l.7-.7" stroke="#424242" stroke-width="1"/></svg>
<div class="t" style="left:800.40px;top:663.41px;font-size:10.5px;line-height:10.5px;color:#242424;font-family:'Liberation Sans', sans-serif;transform:scaleX(0.9816);transform-origin:0 0;">Display Settings</div>
</body></html>
